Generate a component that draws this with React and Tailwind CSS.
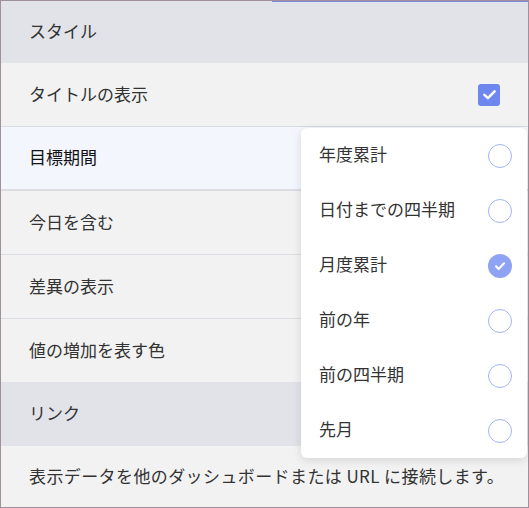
import React from "react";

const font = { fontFamily: '"Noto Sans CJK JP", "Noto Sans", sans-serif' };

const options = [
  { label: "年度累計", checked: false },
  { label: "日付までの四半期", checked: false },
  { label: "月度累計", checked: true },
  { label: "前の年", checked: false },
  { label: "前の四半期", checked: false },
  { label: "先月", checked: false },
];

const Radio = ({ checked }) =>
  checked ? (
    <span className="flex size-6 items-center justify-center rounded-full bg-[#8fa3f4]">
      <svg viewBox="0 0 24 24" className="size-4" fill="none" stroke="white" strokeWidth="3.2" strokeLinecap="round" strokeLinejoin="round">
        <path d="M6 12.5l4 4 8-8.5" />
      </svg>
    </span>
  ) : (
    <span className="size-6 rounded-full border-[1.5px] border-[#a3b4f6]" />
  );

const Row = ({ children, active, right }) => (
  <div
    className={`flex h-[64px] items-center justify-between pl-7 pr-7 text-[17px] ${
      active ? "border-b-2 border-[#dcdde3] bg-[#f3f6fd] text-[#111]" : "border-b border-[#dcdde3] bg-[#f2f2f2] text-[#333]"
    }`}
  >
    <span className="pb-[2px]">{children}</span>
    {right}
  </div>
);

const Header = ({ children, h = "h-[63px]" }) => (
  <div className={`flex ${h} items-center bg-[#e2e3e8] pb-[2px] pl-7 text-[17px] text-[#333]`}>{children}</div>
);

export default function App() {
  return (
    <div className="h-[508px] w-[529px] overflow-hidden" style={font}>
      <div className="relative h-full w-full border border-[#a08f9c] bg-[#f2f2f2]">
        <div className="absolute right-0 top-0 h-px w-[256px] bg-[#7f8ad8]" />
        <Header h="h-[62px]">スタイル</Header>
        <Row
          right={
            <span className="flex size-[22px] items-center justify-center rounded-[3px] bg-[#6d87ee]">
              <svg viewBox="0 0 24 24" className="size-[19px]" fill="none" stroke="white" strokeWidth="3.2" strokeLinecap="round" strokeLinejoin="round">
                <path d="M5.5 12.5l4.5 4 8.5-8.5" />
              </svg>
            </span>
          }
        >
          タイトルの表示
        </Row>
        <Row active>目標期間</Row>
        <Row>今日を含む</Row>
        <Row>差異の表示</Row>
        <div className="flex h-[63px] items-center bg-[#f2f2f2] pb-[2px] pl-7 text-[17px] text-[#333]">値の増加を表す色</div>
        <Header h="h-[64px]">リンク</Header>
        <div className="flex h-[62px] items-center pb-[2px] pl-7 text-[17px] tracking-[0.4px] text-[#333]">
          表示データを他のダッシュボードまたは URL に接続します。
        </div>

        <div className="absolute left-[300px] top-[127px] w-[226px] rounded-md bg-white shadow-[0_2px_10px_rgba(0,0,0,0.12)]">
          {options.map((o) => (
            <div key={o.label} className="flex h-[55px] items-center justify-between pl-[18px] pr-[15px] text-[17px] text-[#333]">
              <span className="pb-[3px]">{o.label}</span>
              <Radio checked={o.checked} />
            </div>
          ))}
        </div>
      </div>
    </div>
  );
}
